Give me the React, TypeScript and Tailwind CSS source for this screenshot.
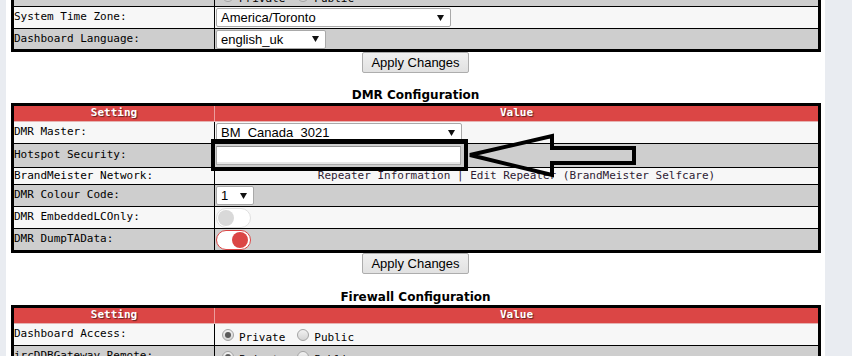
import React from "react";

const mono = "font-['DejaVu_Sans_Mono',monospace] text-[11px] text-black";
const sans = "font-['Liberation_Sans',Arial,sans-serif]";

function Arrow() {
  return (
    <svg width="7" height="6" viewBox="0 0 7 6" className="shrink-0">
      <polygon points="0,0 7,0 3.5,6" fill="#111" />
    </svg>
  );
}

function Select({ w, text }: { w: number; text: string }) {
  return (
    <div
      className={`flex h-[19px] items-center justify-between rounded-[2px] border border-[#a9a9a9] bg-white pl-[4px] pr-[6px] text-[13px] text-black ${sans}`}
      style={{ width: w }}
    >
      <span className="leading-none">{text}</span>
      <Arrow />
    </div>
  );
}

function Radio({ checked }: { checked?: boolean }) {
  return (
    <span className="flex h-[12px] w-[12px] shrink-0 items-center justify-center rounded-full border border-[#a3a3a3] bg-gradient-to-b from-[#f2f2f2] to-[#d4d4d4]">
      {checked && <span className="h-[6px] w-[6px] rounded-full bg-[#5a5a5a]" />}
    </span>
  );
}

function Radios() {
  return (
    <div className="flex items-center pl-[6px]">
      <Radio checked />
      <span className={`${mono} pl-[5px] pt-[6px] leading-none`}>Private</span>
      <span className="w-[12px]" />
      <Radio />
      <span className={`${mono} pl-[5px] pt-[6px] leading-none`}>Public</span>
    </div>
  );
}

function Toggle({ on }: { on?: boolean }) {
  return on ? (
    <div className="flex h-[20px] w-[35px] items-center justify-end rounded-full border border-[#db4645] bg-white px-[2px]">
      <div className="h-[16px] w-[16px] rounded-full bg-[#db4645]" />
    </div>
  ) : (
    <div className="flex h-[20px] w-[35px] items-center justify-start rounded-full border border-[#e0e0e0] bg-white px-[1px]">
      <div className="h-[16px] w-[16px] rounded-full bg-[#d9d9d9]" />
    </div>
  );
}

function Row({
  label,
  gray,
  h,
  first,
  children,
}: {
  label: string;
  gray?: boolean;
  h: number;
  first?: boolean;
  children?: React.ReactNode;
}) {
  return (
    <div
      className={`flex ${first ? "" : "border-t border-black"} ${gray ? "bg-[#cecece]" : "bg-[#f7f7f7]"}`}
      style={{ height: h }}
    >
      <div className={`flex w-[201px] shrink-0 items-center border-r border-black ${mono}`}>{label}</div>
      <div className="flex min-w-0 flex-1 items-center pl-[1px]">{children}</div>
    </div>
  );
}

function Header() {
  return (
    <div className="flex h-[16px] border-b border-[#e6b3b2] bg-[#db4645]">
      <div className="flex w-[201px] shrink-0 items-center justify-center border-r border-[#ec9d9c] font-['DejaVu_Sans_Mono',monospace] text-[11px] font-bold text-white [text-shadow:1px_1px_1px_rgba(0,0,0,0.55)]">
        Setting
      </div>
      <div className="flex flex-1 items-center justify-center font-['DejaVu_Sans_Mono',monospace] text-[11px] font-bold text-white [text-shadow:1px_1px_1px_rgba(0,0,0,0.55)]">
        Value
      </div>
    </div>
  );
}

function Button() {
  return (
    <div className="flex justify-center">
      <div
        className={`flex h-[21px] w-[107px] items-center justify-center rounded-[2px] border border-[#adadad] bg-gradient-to-b from-[#f0f0f0] to-[#e1e1e1] text-[13px] text-black ${sans}`}
      >
        Apply Changes
      </div>
    </div>
  );
}

function Heading({ text, mt }: { text: string; mt: string }) {
  return (
    <div
      className={`${mt} flex h-[16px] items-center justify-center font-['DejaVu_Sans',sans-serif] text-[12px] font-bold leading-[16px] text-black`}
    >
      {text}
    </div>
  );
}

export default function App() {
  return (
    <div className="relative flex h-[356px] w-[852px] overflow-hidden bg-[#e9ecf1]">
      <div className="ml-[6px] h-full w-[819px] bg-white px-[5px]">
        {/* General config tail */}
        <div className="mt-[-18px] w-[810px] border-[3px] border-black">
          <Row label="Node Type:" gray h={21} first>
            <Radios />
          </Row>
          <Row label="System Time Zone:" h={22}>
            <Select w={235} text="America/Toronto" />
          </Row>
          <Row label="Dashboard Language:" gray h={21}>
            <Select w={110} text="english_uk" />
          </Row>
        </div>
        <Button />

        <Heading text="DMR Configuration" mt="mt-[14px]" />
        <div className="w-[810px] border-[3px] border-black">
          <Header />
          <Row label="DMR Master:" h={21} first>
            <Select w={246} text="BM_Canada_3021" />
          </Row>
          <Row label="Hotspot Security:" gray h={24}>
            <div className="h-[19px] w-[245px] border border-[#a9a9a9] border-t-[#8f8f8f] bg-white shadow-[inset_0_-2px_0_#e6e6e6]" />
          </Row>
          <Row label="BrandMeister Network:" h={17}>
            <div className="flex flex-1 justify-center pr-[1px] font-['DejaVu_Sans_Mono',monospace] text-[11px] text-[#2e1b33]">
              Repeater Information | Edit Repeater (BrandMeister Selfcare)
            </div>
          </Row>
          <Row label="DMR Colour Code:" gray h={22}>
            <Select w={38} text="1" />
          </Row>
          <Row label="DMR EmbeddedLCOnly:" h={22}>
            <Toggle />
          </Row>
          <Row label="DMR DumpTAData:" gray h={22}>
            <Toggle on />
          </Row>
        </div>
        <Button />

        <Heading text="Firewall Configuration" mt="mt-[15px]" />
        <div className="w-[810px] border-[3px] border-black">
          <Header />
          <Row label="Dashboard Access:" h={21} first>
            <Radios />
          </Row>
          <Row label="ircDDBGateway Remote:" gray h={22}>
            <Radios />
          </Row>
          <Row label="SSH Access:" h={22}>
            <Radios />
          </Row>
        </div>
      </div>

      {/* annotation overlay */}
      <svg
        className="pointer-events-none absolute left-0 top-0"
        width="852"
        height="356"
        viewBox="0 0 852 356"
      >
        <rect x="213" y="141" width="253" height="28" fill="none" stroke="#000" strokeWidth="4" />
        <polygon
          points="470,155 552,136 552,148 634,148 634,163 552,163 552,175"
          fill="none"
          stroke="#000"
          strokeWidth="4"
          strokeLinejoin="miter"
        />
      </svg>
    </div>
  );
}
